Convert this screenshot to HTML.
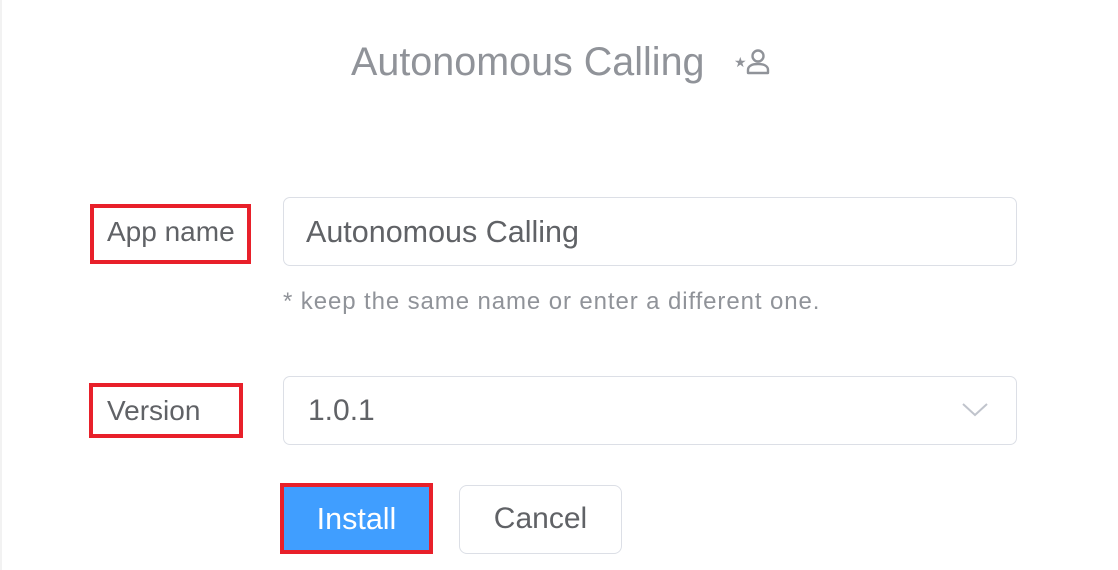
<!DOCTYPE html>
<html><head><style>
body{margin:0;width:1118px;height:570px;background:#fff;font-family:"Liberation Sans",Arial,sans-serif;position:relative;overflow:hidden}
.a{position:absolute;white-space:nowrap}
.red{position:absolute;border:4px solid #e8202a;box-sizing:border-box}
.inp{position:absolute;border:1.5px solid #dcdfe6;border-radius:7px;box-sizing:border-box}
</style></head><body>
<div class="a" style="left:0;top:0;width:2px;height:570px;background:#f2f2f2"></div>
<div class="a" style="left:351px;top:40px;font-size:39.5px;color:#909399">Autonomous Calling</div>
<svg class="a" style="left:734px;top:46px" width="40" height="32" viewBox="0 0 40 32">
<text x="0" y="21" font-size="14" fill="#909399" font-family="Liberation Sans">★</text>
<circle cx="24" cy="10" r="5.5" fill="none" stroke="#909399" stroke-width="2.4"/>
<path d="M14 27 v-3 c0-4 4-6 10-6 s10 2 10 6 v3 z" fill="none" stroke="#909399" stroke-width="2.4" stroke-linejoin="round"/>
</svg>
<div class="red" style="left:90px;top:204px;width:161px;height:60px"></div>
<div class="a" style="left:107px;top:216px;font-size:28px;color:#606266">App name</div>
<div class="inp" style="left:283px;top:197px;width:734px;height:69px"></div>
<div class="a" style="left:306px;top:215px;font-size:30.5px;color:#606266">Autonomous Calling</div>
<div class="a" style="left:283px;top:288px;font-size:24px;letter-spacing:0.9px;color:#909399">* keep the same name or enter a different one.</div>
<div class="red" style="left:89px;top:383px;width:154px;height:55px"></div>
<div class="a" style="left:107px;top:395px;font-size:28px;color:#606266">Version</div>
<div class="inp" style="left:283px;top:376px;width:734px;height:69px"></div>
<div class="a" style="left:308px;top:394px;font-size:30px;color:#606266">1.0.1</div>
<svg class="a" style="left:962px;top:403px" width="26" height="14" viewBox="0 0 26 14"><path d="M1 1 L13 12 L25 1" fill="none" stroke="#c0c4cc" stroke-width="2"/></svg>
<div class="a" style="left:284px;top:486px;width:146px;height:66px;background:#409eff"></div>
<div class="red" style="left:280px;top:483px;width:153px;height:71px"></div>
<div class="a" style="left:280px;top:502px;width:153px;text-align:center;font-size:30.5px;color:#fff">Install</div>
<div class="inp" style="left:459px;top:485px;width:163px;height:69px;border-radius:8px"></div>
<div class="a" style="left:459px;top:502px;width:163px;text-align:center;font-size:30px;color:#606266">Cancel</div>
</body></html>
